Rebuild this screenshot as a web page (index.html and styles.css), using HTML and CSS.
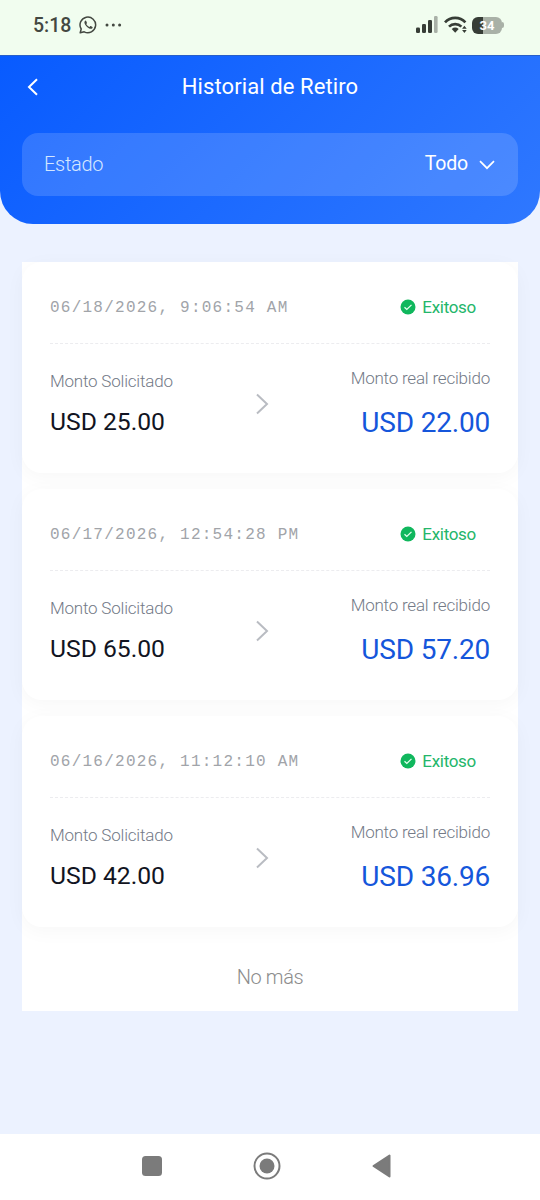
FILE: index.html
```html
<!DOCTYPE html>
<html lang="es">
<head>
<meta charset="utf-8">
<title>Historial de Retiro</title>
<link rel="stylesheet" href="styles.css">
</head>
<body>
<div class="status">
  <span class="clock">5:18</span>
  <svg class="wa" width="18" height="18" viewBox="0 0 18 18" fill="none" stroke="#434841"><path d="M1.2 16.8 2.2 13A7.8 7.8 0 1 1 5.2 15.8Z" stroke-width="1.5" stroke-linejoin="round"/><path d="M6.2 4.7c-1.5 1-.9 3.3 1.4 5.7s4.800 3.200 5.900 1.500c.4-.7.1-1-.4-1.200l-1.400-.7c-.5-.2-.8.6-1.200 1-1.200-.3-2.700-1.700-3.200-3 .8-.8.8-.9.500-1.600l-.5-1.200c-.2-.5-.6-.7-1.100-.5z" fill="#434841" stroke="none"/></svg>
  <svg class="dots" width="17" height="4" viewBox="0 0 17 4" fill="#434841"><circle cx="2" cy="2" r="1.500"/><circle cx="8.300" cy="2" r="1.500"/><circle cx="14.600" cy="2" r="1.500"/></svg>
  <svg class="signal" width="22" height="18" viewBox="0 0 22 18" fill="#373d36"><rect x="0" y="11.500" width="4" height="5.500" rx="1.300"/><rect x="6" y="8" width="4" height="9" rx="1.300"/><rect x="12" y="4" width="4" height="13" rx="1.300"/><rect x="18" y="0" width="3.600" height="17" rx="1.300" fill="#a9b1a7"/></svg>
  <svg class="wifi" width="24" height="18" viewBox="0 0 24 18" fill="none" stroke="#373d36" stroke-width="2.700"><path d="M1 6.300a14 14 0 0 1 20.400 0"/><path d="M5 10.600a8.800 8.800 0 0 1 12.400 0"/><path d="M7.700 13a5.400 5.400 0 0 1 7 0l-3.500 3.700z" fill="#373d36" stroke="none"/><path d="m20.400 9.800 2.300 3h-4.600zM20.400 17l2.300-3h-4.600z" fill="#373d36" stroke="none"/></svg>
  <div class="battery"><span>34</span></div>
  <i class="tip"></i>
</div>
<header class="header">
  <div class="bar">
    <svg class="back" width="12" height="18" viewBox="0 0 12 18" fill="none" stroke="#fff" stroke-width="2"><path d="M10 1.200 2 9l8 7.800"/></svg>
    <h1>Historial de Retiro</h1>
  </div>
  <div class="filter"><span class="name">Estado</span><span class="value">Todo</span>
    <svg width="16" height="10" viewBox="0 0 16 10" fill="none" stroke="#fff" stroke-width="1.700"><path d="m1 1.200 7 7 7-7"/></svg>
  </div>
</header>
<main class="list">
  <article class="card">
    <div class="top"><time>06/18/2026, 9:06:54 AM</time><svg class="check" width="16" height="16" viewBox="0 0 16 16" fill="none"><circle cx="8" cy="8" r="7.500" fill="#10b75d"/><path d="m4.500 8.200 2.300 2.200 4.700-4.500" stroke="#e5fff0" stroke-width="1.300"/></svg><span class="state">Exitoso</span></div>
    <div class="body">
      <div class="asked"><p>Monto Solicitado</p><strong>USD 25.00</strong></div>
      <svg class="arrow" width="14" height="22" viewBox="0 0 14 22" fill="none" stroke="#b9bcc2" stroke-width="2"><path d="m2 1.500 10 9.500L2 20.500"/></svg>
      <div class="received"><p>Monto real recibido</p><strong>USD 22.00</strong></div>
    </div>
  </article>
  <article class="card">
    <div class="top"><time>06/17/2026, 12:54:28 PM</time><svg class="check" width="16" height="16" viewBox="0 0 16 16" fill="none"><circle cx="8" cy="8" r="7.500" fill="#10b75d"/><path d="m4.500 8.200 2.300 2.200 4.700-4.500" stroke="#e5fff0" stroke-width="1.300"/></svg><span class="state">Exitoso</span></div>
    <div class="body">
      <div class="asked"><p>Monto Solicitado</p><strong>USD 65.00</strong></div>
      <svg class="arrow" width="14" height="22" viewBox="0 0 14 22" fill="none" stroke="#b9bcc2" stroke-width="2"><path d="m2 1.500 10 9.500L2 20.500"/></svg>
      <div class="received"><p>Monto real recibido</p><strong>USD 57.20</strong></div>
    </div>
  </article>
  <article class="card">
    <div class="top"><time>06/16/2026, 11:12:10 AM</time><svg class="check" width="16" height="16" viewBox="0 0 16 16" fill="none"><circle cx="8" cy="8" r="7.500" fill="#10b75d"/><path d="m4.500 8.200 2.300 2.200 4.700-4.500" stroke="#e5fff0" stroke-width="1.300"/></svg><span class="state">Exitoso</span></div>
    <div class="body">
      <div class="asked"><p>Monto Solicitado</p><strong>USD 42.00</strong></div>
      <svg class="arrow" width="14" height="22" viewBox="0 0 14 22" fill="none" stroke="#b9bcc2" stroke-width="2"><path d="m2 1.500 10 9.500L2 20.500"/></svg>
      <div class="received"><p>Monto real recibido</p><strong>USD 36.96</strong></div>
    </div>
  </article>
  <div class="end">No más</div>
</main>
<nav class="nav">
  <svg width="20" height="20" viewBox="0 0 20 20"><rect width="20" height="20" rx="3.500" fill="#7b7b7b"/></svg>
  <svg width="28" height="28" viewBox="0 0 28 28"><circle cx="14" cy="14" r="12.500" fill="none" stroke="#7b7b7b" stroke-width="2"/><circle cx="14" cy="14" r="7.500" fill="#7b7b7b"/></svg>
  <svg width="19" height="24" viewBox="0 0 19 24"><path d="M17.500 1.500v21L1.500 12z" fill="#7b7b7b" stroke="#7b7b7b" stroke-width="2" stroke-linejoin="round"/></svg>
</nav>
</body>
</html>
```

FILE: styles.css
```css
* { box-sizing: border-box; }
body {
  margin: 0;
  height: 1200px;
  display: flex;
  flex-direction: column;
  background: #ecf2ff;
  font-family: Roboto, "Liberation Sans", sans-serif;
  overflow: hidden;
}
svg { display: block; flex: none; }
h1, p { margin: 0; }

.status {
  height: 55px;
  flex: none;
  display: flex;
  align-items: center;
  padding: 0 36px 5px 33px;
  background: #f1fdef;
}
.clock { width: 46px; font-size: 19.5px; line-height: 24px; font-weight: 500; color: #434841; padding-top: 2px; }
.dots { margin-left: 8px; }
.signal { margin-left: auto; }
.wifi { margin-left: 6px; }
.battery {
  width: 30px;
  height: 17px;
  margin-left: 4px;
  border-radius: 6px;
  background: linear-gradient(90deg, #373d36 11px, #a9b1a7 11px);
  color: #fff;
  font-size: 13px;
  line-height: 17px;
  font-weight: 700;
  text-align: center;
}
.tip { width: 2px; height: 6px; background: #a9b1a7; border-radius: 0 2px 2px 0; }

.header {
  height: 169px;
  flex: none;
  padding: 0 22px;
  border-top: 1px solid #285fc9;
  border-radius: 0 0 33px 33px;
  background: linear-gradient(135deg, #085bff, #2f78ff);
}
.bar { height: 77px; display: grid; grid-template-columns: 60px 1fr 60px; align-items: center; padding-bottom: 15px; }
.back { margin-left: 5px; }
h1 { font-size: 22px; line-height: 28px; font-weight: 400; letter-spacing: .1px; color: #fff; text-align: center; white-space: nowrap; }
.filter {
  height: 63px;
  display: flex;
  align-items: center;
  padding: 0 23px 0 22px;
  border-radius: 16px;
  background: rgba(255, 255, 255, .15);
  color: #d4e6ff;
  font-size: 20px;
  line-height: 24px;
  font-weight: 300;
}
.name { padding-bottom: 2px; letter-spacing: -.3px; }
.value { margin: 0 11px 0 auto; padding-bottom: 2px; color: #fff; font-weight: 400; font-size: 19.500px; letter-spacing: -.2px; }

.list {
  width: 496px;
  height: 749px;
  flex: none;
  margin: 38px auto 0;
  display: flex;
  flex-direction: column;
  gap: 16px;
  background: #fff;
}
.card {
  height: 211px;
  flex: none;
  padding: 0 28px;
  border-radius: 20px;
  background: #fff;
  box-shadow: 0 4px 20px rgba(0, 0, 0, .035);
}
.top { height: 82px; display: flex; align-items: center; padding: 8px 14px 0 0; border-bottom: 1px dashed #ececef; }
time { padding-top: 2px; font-family: "Liberation Mono", monospace; font-size: 16px; letter-spacing: 1.240px; color: #a1a4a9; white-space: pre; }
.check { margin-left: auto; }
.state { margin-left: 6px; font-size: 17px; letter-spacing: -.3px; color: #24b66a; }
.body { height: 129px; display: grid; grid-template-columns: 205px 14px 1fr; align-items: start; }
.body p { font-size: 17px; line-height: 20px; font-weight: 300; letter-spacing: -.200px; color: #737a87; white-space: nowrap; }
.asked { padding-top: 27px; }
.asked strong { display: block; margin-top: 16px; font-size: 24.700px; line-height: 30px; font-weight: 400; color: #111422; }
.arrow { margin-top: 49px; }
.received { padding-top: 24px; text-align: right; }
.received strong { display: block; margin-top: 18px; font-size: 28px; line-height: 34px; font-weight: 400; letter-spacing: -.2px; color: #1556db; }
.end { margin-top: 22px; text-align: center; font-size: 20px; line-height: 24px; font-weight: 300; letter-spacing: -.400px; color: #8c8c8c; }

.nav {
  height: 66px;
  flex: none;
  margin-top: auto;
  display: flex;
  align-items: center;
  gap: 91px;
  padding: 0 0 3px 142px;
  background: #fff;
}
```
